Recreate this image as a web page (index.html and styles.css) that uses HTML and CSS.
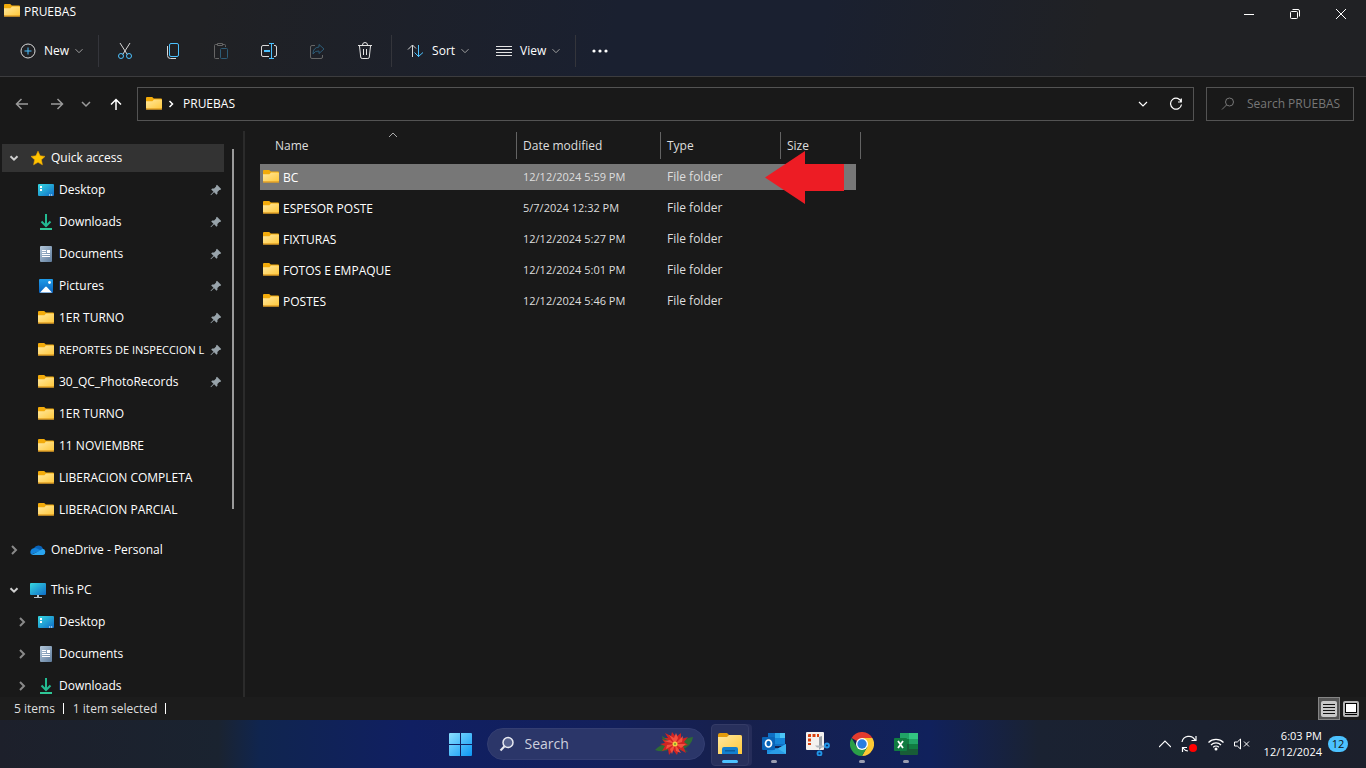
FILE: index.html
```html
<!DOCTYPE html>
<html lang="en">
<head>
    <meta charset="UTF-8">
    <meta name="viewport" content="width=device-width, initial-scale=1.0">
    <title>PRUEBAS</title>
    <link rel="stylesheet" href="styles.css">
</head>
<body>
    <!-- shared icons -->
    <svg class="defs" width="0" height="0" aria-hidden="true">
        <defs>
            <linearGradient id="gFolder" x1="0" y1="0" x2="1" y2="1">
                <stop offset="0" stop-color="#ffe8a0"/><stop offset="1" stop-color="#ffc83a"/>
            </linearGradient>
            <linearGradient id="gScreen" x1="0" y1="0" x2="1" y2="1">
                <stop offset="0" stop-color="#36d8e0"/><stop offset="1" stop-color="#0f6cc8"/>
            </linearGradient>
            <linearGradient id="gDoc" x1="0" y1="0" x2="1" y2="1">
                <stop offset="0" stop-color="#b4c8da"/><stop offset="1" stop-color="#5f7c9c"/>
            </linearGradient>
            <linearGradient id="gPic" x1="0" y1="0" x2="0" y2="1">
                <stop offset="0" stop-color="#1f9cea"/><stop offset="1" stop-color="#0a62bd"/>
            </linearGradient>
            <linearGradient id="gWin" x1="0" y1="0" x2="1" y2="1">
                <stop offset="0" stop-color="#8be0ff"/><stop offset="1" stop-color="#0c97f5"/>
            </linearGradient>
        </defs>
        <symbol id="folder" viewBox="0 1 16 16">
            <path d="M0 3a1 1 0 0 1 1-1h5.200l1.600 1.600H15a1 1 0 0 1 1 1V8H0z" fill="#f3ab0a"/>
            <path d="M0 6.200h6.400L8 4.400h7a1 1 0 0 1 1 1V13a1 1 0 0 1-1 1H1a1 1 0 0 1-1-1z" fill="url(#gFolder)"/>
            <path d="M0 13.300h16a1 1 0 0 1-1 1.400H1a1 1 0 0 1-1-1.400z" fill="#e2a127"/>
        </symbol>
        <symbol id="star" viewBox="0 0 16 16">
            <path d="M8 1.200l2.100 4.600 4.900.6-3.600 3.400 1 5L8 12.300l-4.400 2.500 1-5L1 6.400l4.900-.6z" fill="#ffc400" stroke="#f0a400" stroke-width=".6"/>
        </symbol>
        <symbol id="desktop" viewBox="0 0 16 16">
            <rect y="2" width="16" height="12" rx="1" fill="url(#gScreen)"/>
            <path d="M2 4h2v2H2zM2 7h2v2H2zM11 12.500h1.200v1H11zM13 12.500h1.200v1H13z" fill="#fff"/>
        </symbol>
        <symbol id="download" viewBox="0 0 16 16">
            <path d="M8 0v11.500M3.500 7.500L8 12l4.500-4.500" fill="none" stroke="#23bb92" stroke-width="2"/>
            <rect x="2" y="14" width="12" height="2" fill="#2fc796"/>
        </symbol>
        <symbol id="document" viewBox="0 0 16 16">
            <rect x="2" width="12" height="16" rx="1" fill="url(#gDoc)"/>
            <path d="M4 4h4v1H4zM4 6h4v1H4zM9 4h3v3H9zM4 8h8v1H4zM4 10h8v1H4z" fill="#fff"/>
        </symbol>
        <symbol id="picture" viewBox="0 0 16 16">
            <rect x="1" y="1" width="14" height="14" rx="1" fill="url(#gPic)"/>
            <path d="M2 14.500L7.200 9q.8-.8 1.600 0l5.200 5.500z" fill="#fff"/>
            <circle cx="11.500" cy="4.500" r="1.400" fill="#fff"/>
        </symbol>
        <symbol id="cloud" viewBox="0 0 16 16">
            <path d="M4 6a5 5 0 0 1 9 .5L9 10z" fill="#0a63b8"/>
            <path d="M3.500 6.200A4 4 0 0 0 1.200 12.500L11 8.600 7 6.500a4 4 0 0 0-3.500-.3z" fill="#1383dc"/>
            <path d="M1.500 12.700L9 9l3.500-2.200a3.200 3.200 0 0 1 .7 6.200H3a3 3 0 0 1-1.500-.3z" fill="#2aa5f0"/>
        </symbol>
        <symbol id="pc" viewBox="0 0 16 16">
            <rect y="1" width="16" height="12" rx="1" fill="url(#gScreen)"/>
            <path d="M7 13h2v2H7zM4 15h8v1H4z" fill="#b8c4cc"/>
        </symbol>
        <symbol id="pin" viewBox="0 0 12 12">
            <path d="M7 .8l4.200 4.200-1 1-.8-.1-2 2 .1 1.800-1 1-2.400-2.400L1 11.300l-.5-.5 3-3.100L1.200 5.400l1-1 1.900.1 2-2-.1-.8z" fill="#98a3aa"/>
        </symbol>
        <symbol id="down" viewBox="0 0 10 10">
            <path d="M1.500 3.200L5 6.700l3.500-3.500" fill="none" stroke="currentColor"/>
        </symbol>
        <symbol id="right" viewBox="0 0 10 10">
            <path d="M3 1l4 4-4 4" fill="none" stroke="currentColor"/>
        </symbol>
    </svg>

    <header class="top">
        <div class="titlebar">
            <h1><svg class="ico"><use href="#folder"/></svg>PRUEBAS</h1>
            <div class="window-buttons">
                <button aria-label="Minimize"><svg width="10" height="10"><path d="M0 5.500h10" stroke="#fff"/></svg></button>
                <button aria-label="Restore"><svg width="10" height="10" fill="none" stroke="#fff"><rect x=".5" y="2.500" width="7" height="7" rx="1"/><path d="M2.500.5H8A1.500 1.500 0 0 1 9.500 2v5.500"/></svg></button>
                <button aria-label="Close"><svg width="10" height="10"><path d="M0 0l10 10M10 0L0 10" stroke="#fff"/></svg></button>
            </div>
        </div>
        <div class="toolbar">
            <button class="tool new">
                <svg width="16" height="16" fill="none"><circle cx="8" cy="8" r="7" stroke="#d8d8d8"/><path d="M8 4.500v7M4.500 8h7" stroke="#4cc2ff"/></svg>
                New<svg class="chev"><use href="#down"/></svg>
            </button>
            <span class="sep"></span>
            <div class="icons">
                <button aria-label="Cut"><svg width="16" height="18" fill="none"><path d="M3 1l7.300 11.500M13 1L5.700 12.500" stroke="#d8d8d8"/><g stroke="#4cc2ff"><circle cx="4" cy="14" r="2.500"/><circle cx="12" cy="14" r="2.500"/></g></svg></button>
                <button aria-label="Copy"><svg width="16" height="18" fill="none"><path d="M2.500 4v9.500a3 3 0 0 0 3 3H11" stroke="#d8d8d8"/><rect x="4.500" y="1.500" width="9" height="13" rx="1.500" stroke="#4cc2ff"/></svg></button>
                <button aria-label="Paste" disabled><svg width="16" height="18" fill="none"><path d="M6 16.500H2.500a1 1 0 0 1-1-1v-12a1 1 0 0 1 1-1H4m6 0h1.500a1 1 0 0 1 1 1V5M4.500 1.500h5v2h-5z" stroke="#666"/><rect x="7.500" y="6.500" width="7" height="10" rx="1" stroke="#2d5c77"/></svg></button>
                <button aria-label="Rename"><svg width="18" height="18" fill="none"><path d="M9 3.500H3A1.500 1.500 0 0 0 1.500 5v8A1.500 1.500 0 0 0 3 14.500h6M14 3.500h1A1.500 1.500 0 0 1 16.500 5v8a1.500 1.500 0 0 1-1.500 1.500h-1" stroke="#d8d8d8"/><path d="M11.500 1.500v15M9 1.500h5M9 16.500h5" stroke="#4cc2ff"/><path d="M4 9h6" stroke="#4cc2ff" stroke-width="2"/></svg></button>
                <button aria-label="Share" disabled><svg width="16" height="18" fill="none"><path d="M6 3.500H3A1.500 1.500 0 0 0 1.500 5v10A1.500 1.500 0 0 0 3 16.500h9a1.500 1.500 0 0 0 1.500-1.500v-2" stroke="#666"/><path d="M10 2.500L15 7l-5 4.500V9Q6 8.500 4 12q0-6.500 6-7z" stroke="#2d5c77"/></svg></button>
                <button aria-label="Delete"><svg width="16" height="18" fill="none" stroke="#e4e4e4"><path d="M1 3.500h14M5.500 3a2.500 2.500 0 0 1 5 0M2.500 4l1.200 11a1.500 1.500 0 0 0 1.500 1.500h5.600a1.500 1.500 0 0 0 1.500-1.500l1.200-11M6.500 7v6M9.500 7v6"/></svg></button>
            </div>
            <span class="sep"></span>
            <button class="tool">
                <svg width="17" height="16" fill="none"><path d="M5.500 14V2M1 6.500L5.500 2 9 5.500" stroke="#d8d8d8"/><path d="M11.500 2v12M7.500 9.500l4 4 4.500-4" stroke="#4cc2ff"/></svg>
                Sort<svg class="chev"><use href="#down"/></svg>
            </button>
            <button class="tool view">
                <svg width="16" height="16"><path d="M0 3.500h16M0 6.500h16M0 9.500h16M0 12.500h16" stroke="#e4e4e4"/></svg>
                View<svg class="chev"><use href="#down"/></svg>
            </button>
            <span class="sep"></span>
            <button class="more" aria-label="More"><svg width="16" height="4" fill="#fff"><circle cx="2" cy="2" r="1.600"/><circle cx="8" cy="2" r="1.600"/><circle cx="14" cy="2" r="1.600"/></svg></button>
        </div>
    </header>

    <div class="address-row">
        <div class="nav-buttons">
            <button aria-label="Back"><svg width="14" height="12"><path d="M13 6H1.500M6.500 1l-5 5 5 5" fill="none" stroke="#9a9a9a" stroke-width="1.500"/></svg></button>
            <button aria-label="Forward"><svg width="14" height="12"><path d="M1 6h11.500M7.500 1l5 5-5 5" fill="none" stroke="#9a9a9a" stroke-width="1.500"/></svg></button>
            <button class="small" aria-label="Recent"><svg width="10" height="8"><path d="M1 2l4 4 4-4" fill="none" stroke="#9a9a9a" stroke-width="1.500"/></svg></button>
            <button aria-label="Up"><svg width="12" height="12"><path d="M6 12V1.500M1 6.500l5-5 5 5" fill="none" stroke="#fff" stroke-width="1.500"/></svg></button>
        </div>
        <nav class="address">
            <svg class="ico"><use href="#folder"/></svg>
            <svg class="crumb" viewBox="0 0 6 8"><path d="M1.500 1l3 3-3 3" fill="none" stroke="#fff" stroke-width="1.500"/></svg>
            <a href="#">PRUEBAS</a>
            <button aria-label="Previous locations"><svg width="10" height="8"><path d="M1 2l4 4 4-4" fill="none" stroke="#fff" stroke-width="1.200"/></svg></button>
            <button aria-label="Refresh"><svg width="14" height="14" fill="none"><path d="M12.300 5A5.500 5.500 0 1 0 12.500 7.500M12.300 1.500V5H9" stroke="#fff" stroke-width="1.200"/></svg></button>
        </nav>
        <label class="search">
            <svg width="14" height="14"><circle cx="8.500" cy="5" r="4" fill="none" stroke="#777"/><path d="M5.500 8L1 12.500" stroke="#777"/></svg>
            <input type="text" placeholder="Search PRUEBAS" aria-label="Search PRUEBAS">
        </label>
    </div>

    <main>
        <nav class="sidebar">
            <a class="root selected" href="#"><svg class="arrow open"><use href="#down"/></svg><svg class="ico"><use href="#star"/></svg><span>Quick access</span></a>
            <a href="#"><svg class="ico"><use href="#desktop"/></svg><span>Desktop</span><svg class="pin"><use href="#pin"/></svg></a>
            <a href="#"><svg class="ico"><use href="#download"/></svg><span>Downloads</span><svg class="pin"><use href="#pin"/></svg></a>
            <a href="#"><svg class="ico"><use href="#document"/></svg><span>Documents</span><svg class="pin"><use href="#pin"/></svg></a>
            <a href="#"><svg class="ico"><use href="#picture"/></svg><span>Pictures</span><svg class="pin"><use href="#pin"/></svg></a>
            <a href="#"><svg class="ico"><use href="#folder"/></svg><span>1ER TURNO</span><svg class="pin"><use href="#pin"/></svg></a>
            <a href="#"><svg class="ico"><use href="#folder"/></svg><span class="long">REPORTES DE INSPECCION L</span><svg class="pin"><use href="#pin"/></svg></a>
            <a href="#"><svg class="ico"><use href="#folder"/></svg><span>30_QC_PhotoRecords</span><svg class="pin"><use href="#pin"/></svg></a>
            <a href="#"><svg class="ico"><use href="#folder"/></svg><span>1ER TURNO</span></a>
            <a href="#"><svg class="ico"><use href="#folder"/></svg><span>11 NOVIEMBRE</span></a>
            <a href="#"><svg class="ico"><use href="#folder"/></svg><span>LIBERACION COMPLETA</span></a>
            <a href="#"><svg class="ico"><use href="#folder"/></svg><span>LIBERACION PARCIAL</span></a>
            <a class="root group" href="#"><svg class="arrow"><use href="#right"/></svg><svg class="ico"><use href="#cloud"/></svg><span>OneDrive - Personal</span></a>
            <a class="root group" href="#"><svg class="arrow open"><use href="#down"/></svg><svg class="ico"><use href="#pc"/></svg><span>This PC</span></a>
            <a class="sub" href="#"><svg class="arrow"><use href="#right"/></svg><svg class="ico"><use href="#desktop"/></svg><span>Desktop</span></a>
            <a class="sub" href="#"><svg class="arrow"><use href="#right"/></svg><svg class="ico"><use href="#document"/></svg><span>Documents</span></a>
            <a class="sub" href="#"><svg class="arrow"><use href="#right"/></svg><svg class="ico"><use href="#download"/></svg><span>Downloads</span></a>
            <div class="scrollbar"></div>
        </nav>

        <section class="files">
            <table>
                <thead>
                    <tr>
                        <th class="name">Name<svg class="sorted" viewBox="0 0 10 6"><path d="M1 5l4-4 4 4" fill="none" stroke="#aaa"/></svg></th>
                        <th class="date">Date modified</th>
                        <th class="type">Type</th>
                        <th class="size">Size</th>
                    </tr>
                </thead>
                <tbody>
                    <tr class="selected">
                        <td><svg class="ico"><use href="#folder"/></svg>BC</td><td class="when">12/12/2024 5:59 PM</td><td>File folder</td>
                        <td><svg class="red-arrow" viewBox="0 0 79 53"><path d="M0 26.500L40 0v13h39v27H40v13z" fill="#ed1c24"/></svg></td>
                    </tr>
                    <tr><td><svg class="ico"><use href="#folder"/></svg>ESPESOR POSTE</td><td class="when">5/7/2024 12:32 PM</td><td>File folder</td><td></td></tr>
                    <tr><td><svg class="ico"><use href="#folder"/></svg>FIXTURAS</td><td class="when">12/12/2024 5:27 PM</td><td>File folder</td><td></td></tr>
                    <tr><td><svg class="ico"><use href="#folder"/></svg>FOTOS E EMPAQUE</td><td class="when">12/12/2024 5:01 PM</td><td>File folder</td><td></td></tr>
                    <tr><td><svg class="ico"><use href="#folder"/></svg>POSTES</td><td class="when">12/12/2024 5:46 PM</td><td>File folder</td><td></td></tr>
                </tbody>
            </table>
        </section>
    </main>

    <div class="status">
        <span class="count">5 items</span>
        <span class="count">1 item selected</span>
        <div class="view-modes">
            <button class="active" aria-label="Details"><svg width="16" height="16"><rect width="16" height="16" rx="2" fill="#c8c8c8"/><path d="M2 3.500h12M2 6.500h12M2 9.500h12M2 12.500h12" stroke="#111"/></svg></button>
            <button aria-label="Large icons"><svg width="16" height="16"><rect width="16" height="16" rx="2" fill="#b4b4b4"/><rect x="2.500" y="2.500" width="11" height="9" fill="#fff" stroke="#000"/><path d="M2 13.500h12" stroke="#000"/></svg></button>
        </div>
    </div>

    <footer class="taskbar">
        <div class="apps">
            <button aria-label="Start"><svg width="23" height="23" viewBox="0 0 23 23"><path d="M1 0h10v11H0V1a1 1 0 0 1 1-1zM12 0h10a1 1 0 0 1 1 1v10H12zM0 12h11v11H1a1 1 0 0 1-1-1zM12 12h11v10a1 1 0 0 1-1 1H12z" fill="url(#gWin)"/></svg></button>
            <label class="task-search">
                <svg width="16" height="16"><circle cx="9" cy="6.500" r="5" fill="#56618e" stroke="#e8eaf2" stroke-width="1.500"/><path d="M5.500 10.200L1.500 14.500" stroke="#e8eaf2" stroke-width="2"/></svg>
                <input type="text" placeholder="Search" aria-label="Search">
                <svg width="38" height="26" viewBox="0 0 38 26">
                    <path d="M13 13Q5 13 0 19q8 3 15-1zM25 11q4-4 13-5-1 9-12 13zM27 16l6 5-8-2zM12 8L7 5l1 5 5 2z" fill="#2f6b35"/>
                    <path d="M19 13L9 7l4 0-3-5 6 3 1-4 4 5 5-4v6l7-2-4 5 4 3-5 1 3 7-7-4-2 6-4-5-4 5-1-6-6 2 3-5-5-2 5-1-3-4z" fill="#d02422"/>
                    <path d="M20 13L14 4l5 3 2-5 2 5zM20 13l8-8-1 6zM20 13l11 0-5 4zM20 13l6 9-5-2zM20 13l-3 10-2-5zM20 13l-9 5 1-4zM20 13L9 10l6-1z" fill="#f4503f"/>
                    <circle cx="20" cy="13" r="2.500" fill="#f2cf3c"/><circle cx="20" cy="13" r="1" fill="#6e9b30"/>
                </svg>
            </label>
            <button class="app current" aria-label="File Explorer"><svg width="24" height="24" viewBox="0 0 24 24">
                <path d="M0 3a2 2 0 0 1 2-2h7l2 2h11a2 2 0 0 1 2 2v4H0z" fill="#e39b0b"/><path d="M0 5h9l2-2h11a2 2 0 0 1 2 2v17H0z" fill="url(#gFolder)"/>
                <path d="M4 22v-5a2 2 0 0 1 2-2h12a2 2 0 0 1 2 2v5z" fill="#1380cf"/><path d="M7 18h10v1.500H7z" fill="#0c5c9d"/></svg></button>
            <button class="app" aria-label="Outlook"><svg width="24" height="24" viewBox="0 0 24 24">
                <path d="M6 1h17v13H6z" fill="#0f6fc4"/><path d="M13 1h10v5H13z" fill="#2ba6ea"/><path d="M18 1h5v5h-5z" fill="#4cc6f6"/><path d="M13 6h10v6H13z" fill="#1585d8"/>
                <path d="M5 12l10 5 9-5v10H5z" fill="#1b8fe0"/><path d="M24 12v10L12 15.500l3 1.500z" fill="#3cb4f0"/><path d="M5 22l10-6 9 6z" fill="#2a9ce6"/>
                <rect y="5" width="13" height="13" rx="1" fill="#0a64b8"/><ellipse cx="6.500" cy="11.500" rx="3" ry="3.500" fill="none" stroke="#fff" stroke-width="1.700"/></svg></button>
            <button class="app idle" aria-label="Snipping Tool"><svg width="24" height="24" viewBox="0 0 24 24">
                <rect width="18" height="18" rx="1" fill="#f3f1ef"/><path d="M2 5V3a1 1 0 0 1 1-1h2v3zM6.500 2h3v3h-3zM11 2h2v3h-2zM2 6.500h3v3H2zM2 11h3v2H2z" fill="#d8400f"/>
                <path d="M13 5l3-1v11l-3 3z" fill="#9aa0a6"/><path d="M9 13.500h10v2h-8z" fill="#b4babf"/>
                <g fill="#0d2d66" stroke="#2196e8" stroke-width="1.800"><circle cx="21" cy="13.500" r="2"/><circle cx="13.500" cy="21.500" r="2"/></g></svg></button>
            <button class="app" aria-label="Chrome"><svg width="24" height="24" viewBox="0 0 24 24">
                <path d="M12 12L1.600 6A12 12 0 0 1 22.400 6z" fill="#e33b2e"/><path d="M12 12V6h10.400A12 12 0 0 1 12 24l5.200-9z" fill="#fcc934"/><path d="M12 12l5.200 3L12 24A12 12 0 0 1 1.600 6l5.200 9z" fill="#2a9e48"/>
                <circle cx="12" cy="12" r="6" fill="#fff"/><circle cx="12" cy="12" r="4.700" fill="#2a7de1"/></svg></button>
            <button class="app" aria-label="Excel"><svg width="24" height="24" viewBox="0 0 24 24">
                <rect x="6" y="1" width="18" height="22" rx="1" fill="#185c37"/><path d="M6 1h9v6H6z" fill="#21a366"/><path d="M15 1h9v6h-9z" fill="#33c481"/><path d="M6 7h9v5H6z" fill="#107c41"/><path d="M15 7h9v5h-9z" fill="#21a366"/><path d="M15 12h9v5h-9z" fill="#107c41"/>
                <rect y="6" width="13" height="13" rx="1" fill="#107c41"/><path d="M4 9l5 7M9 9l-5 7" stroke="#fff" stroke-width="1.800"/></svg></button>
        </div>
        <div class="tray">
            <button aria-label="Hidden icons"><svg width="12" height="8"><path d="M0 7l6-6 6 6" fill="none" stroke="#fff" stroke-width="1.200"/></svg></button>
            <button aria-label="Updates"><svg width="17" height="18"><path d="M1 7A7 7 0 0 1 14 5M15 1v4.500h-4.500M1.500 17v-4.500H6M2 13a7 7 0 0 0 5 3" fill="none" stroke="#fff" stroke-width="1.200"/><circle cx="12" cy="13" r="4" fill="#f00"/></svg></button>
            <button aria-label="Network"><svg width="16" height="14"><path d="M.5 5.500a10.500 10.500 0 0 1 15 0M3 8a7 7 0 0 1 10 0M5.200 10.300a4 4 0 0 1 5.600 0" fill="none" stroke="#fff" stroke-width="1.200"/><circle cx="8" cy="12" r="1.500" fill="#fff"/></svg></button>
            <button aria-label="Volume"><svg width="16" height="12"><path d="M.5 4h2.800L6.500 1v10L3.300 8H.5zM10 3.500l5 5M15 3.500l-5 5" fill="none" stroke="#fff"/></svg></button>
            <time>6:03 PM<br>12/12/2024</time>
            <span class="badge">12</span>
        </div>
    </footer>
</body>
</html>
```

FILE: styles.css
```css
* {
    box-sizing: border-box;
}
body {
    margin: 0;
    height: 100vh;
    display: flex;
    flex-direction: column;
    background: #191919;
    color: #fff;
    font-family: "Open Sans", "Noto Sans", sans-serif;
    font-size: 12px;
    line-height: 16px;
    overflow: hidden;
}
button {
    display: flex;
    align-items: center;
    justify-content: center;
    padding: 0;
    border: 0;
    background: none;
    color: inherit;
    font: inherit;
}
input {
    flex: 1;
    min-width: 0;
    padding: 0;
    border: 0;
    outline: 0;
    background: none;
    color: #fff;
    font: inherit;
}
a {
    color: inherit;
    text-decoration: none;
}
svg {
    flex: none;
}
.defs {
    position: absolute;
}
.ico {
    width: 16px;
    height: 16px;
}

/* title bar and commands */
.top {
    background: linear-gradient(100deg, #202124 15%, #1a2030 45%, #1a2030 60%, #202124 80%);
    border-bottom: 1px solid #3c3c3e;
}
.titlebar {
    display: flex;
    justify-content: space-between;
    height: 28px;
}
.titlebar h1 {
    display: flex;
    gap: 4px;
    margin: 0;
    padding: 4px;
    font-size: 12px;
    font-weight: normal;
}
.titlebar h1 .ico {
    margin-top: -1px;
}
.window-buttons {
    display: flex;
    padding-right: 2px;
}
.window-buttons button {
    width: 46px;
}
.toolbar {
    display: flex;
    align-items: center;
    height: 48px;
    padding-bottom: 3px;
}
.tool {
    gap: 8px;
    padding: 0 14px 0 15px;
    font-weight: 500;
}
.tool.new {
    padding-left: 20px;
}
.tool.view {
    padding-left: 12px;
}
.chev {
    width: 10px;
    height: 10px;
    margin-left: -3px;
    color: #a0a0a0;
}
.sep {
    width: 1px;
    height: 32px;
    background: #34353b;
}
.icons {
    display: flex;
    padding: 0 2px;
}
.icons button,
.more {
    width: 48px;
    height: 32px;
}

/* address bar */
.address-row {
    display: flex;
    height: 54px;
    padding: 10px 12px 10px 4px;
}
.nav-buttons {
    display: flex;
    width: 133px;
}
.nav-buttons button {
    width: 35px;
}
.nav-buttons .small {
    width: 24px;
}
.address {
    flex: 1;
    display: flex;
    align-items: center;
    padding: 0 1px 0 8px;
    border: 1px solid #535353;
}
.crumb {
    width: 6px;
    height: 8px;
    margin: 0 9px 0 6px;
}
.address a {
    flex: 1;
}
.address button {
    width: 33px;
    height: 32px;
}
.search {
    display: flex;
    align-items: center;
    gap: 12px;
    width: 148px;
    margin-left: 12px;
    padding: 0 0 0 14px;
    border: 1px solid #535353;
}
.search input::placeholder {
    color: #777;
}

main {
    flex: 1;
    display: flex;
    min-height: 0;
}

/* folder tree */
.sidebar {
    position: relative;
    flex: none;
    width: 245px;
    padding: 11px 19px 0 2px;
    border-right: 2px solid #2b2b2b;
    overflow: hidden;
}
.sidebar a {
    display: flex;
    align-items: center;
    height: 32px;
    padding-left: 36px;
}
.sidebar a.root {
    padding-left: 7px;
}
.sidebar a.sub {
    padding-left: 15px;
}
.sidebar a.group {
    margin-top: 8px;
}
.sidebar a.selected {
    height: 28px;
    margin: 2px 0;
    background: #333;
}
.sidebar span {
    flex: 1;
    margin-left: 5px;
    white-space: nowrap;
}
.sidebar .long {
    font-size: 11px;
}
.arrow {
    width: 10px;
    height: 10px;
    margin-right: 11px;
    color: #8a8a8a;
    stroke-width: 2px;
}
.arrow.open {
    color: #d0d0d0;
}
.pin {
    width: 12px;
    height: 12px;
    margin-right: 2px;
}
.scrollbar {
    position: absolute;
    top: 18px;
    right: 9px;
    width: 2px;
    height: 360px;
    background: #9a9a9a;
}

/* file list */
.files {
    flex: 1;
    padding-left: 15px;
}
table {
    width: 601px;
    table-layout: fixed;
    border-collapse: separate;
    border-spacing: 0 5px;
    margin-top: -4px;
}
th {
    position: relative;
    height: 27px;
    padding: 0 0 0 6px;
    border-right: 1px solid #636363;
    color: #dedede;
    font-weight: normal;
    text-align: left;
}
th.name {
    width: 257px;
    padding-left: 15px;
}
th.date {
    width: 144px;
}
th.type {
    width: 120px;
}
.sorted {
    position: absolute;
    top: 0;
    left: 128px;
    width: 10px;
    height: 6px;
}
td {
    position: relative;
    height: 26px;
    padding: 0 0 0 6px;
    color: #dedede;
}
td:first-child {
    padding-left: 3px;
    color: #fff;
}
td.when {
    font-size: 11px;
}
td .ico {
    margin-right: 4px;
    vertical-align: -3px;
}
tbody .selected {
    background: linear-gradient(#777, #777) no-repeat left / calc(100% - 5px) 100%;
}
td .red-arrow {
    position: absolute;
    top: -13px;
    left: -16px;
    width: 79px;
    height: 53px;
}

.status {
    display: flex;
    align-items: center;
    height: 23px;
    padding: 0 4px 0 14px;
    background: #1c1c1c;
    color: #dedede;
}
.count {
    display: flex;
    align-items: center;
    margin-right: 9px;
}
.count::after {
    content: "";
    width: 1px;
    height: 11px;
    margin-left: 8px;
    background: #fff;
}
.view-modes {
    display: flex;
    margin-left: auto;
}
.view-modes button {
    width: 22px;
    height: 23px;
}
.view-modes .active {
    background: #555;
    border: 1px solid #858585;
}

/* taskbar */
.taskbar {
    display: grid;
    grid-template-columns: 1fr auto 1fr;
    height: 48px;
    background: linear-gradient(90deg, #1d202b 0, #1a2330 16%, #10254f 19%, #101f62 30%, #13205c 45%, #17204c 54%, #10215c 68%, #1a2232 76%, #1c202c 100%);
}
.apps {
    grid-column: 2;
    display: flex;
    align-items: center;
}
.apps button {
    position: relative;
    width: 44px;
    height: 48px;
}
.task-search {
    display: flex;
    align-items: center;
    gap: 10px;
    width: 218px;
    height: 32px;
    margin: 0 3px 0 4px;
    padding: 0 11px;
    border: 1px solid #343e72;
    border-radius: 16px;
    background: #2b3669;
    font-size: 14px;
}
.task-search input::placeholder {
    color: #cdd0de;
}
.app::after {
    content: "";
    position: absolute;
    bottom: 5px;
    left: 19px;
    width: 6px;
    height: 3px;
    border-radius: 2px;
    background: #9a9db0;
}
.app.idle::after {
    display: none;
}
.app.current::before {
    content: "";
    position: absolute;
    top: 4px;
    left: 3px;
    width: 36px;
    height: 40px;
    border: 1px solid #343b66;
    border-radius: 4px;
    background: #28305c;
    box-shadow: 3px 0 #262d5a;
}
.app.current svg {
    position: relative;
}
.app.current::after {
    left: 14px;
    width: 16px;
    background: #4cc2ff;
}
.tray {
    display: flex;
    align-items: center;
    justify-content: flex-end;
    gap: 10px;
    padding-right: 18px;
}
.tray time {
    margin-left: 4px;
    font-size: 11px;
    text-align: right;
}
.badge {
    width: 20px;
    margin-left: -4px;
    border-radius: 8px;
    background: #4cc2ff;
    color: #111;
    font-size: 11px;
    text-align: center;
}
```
